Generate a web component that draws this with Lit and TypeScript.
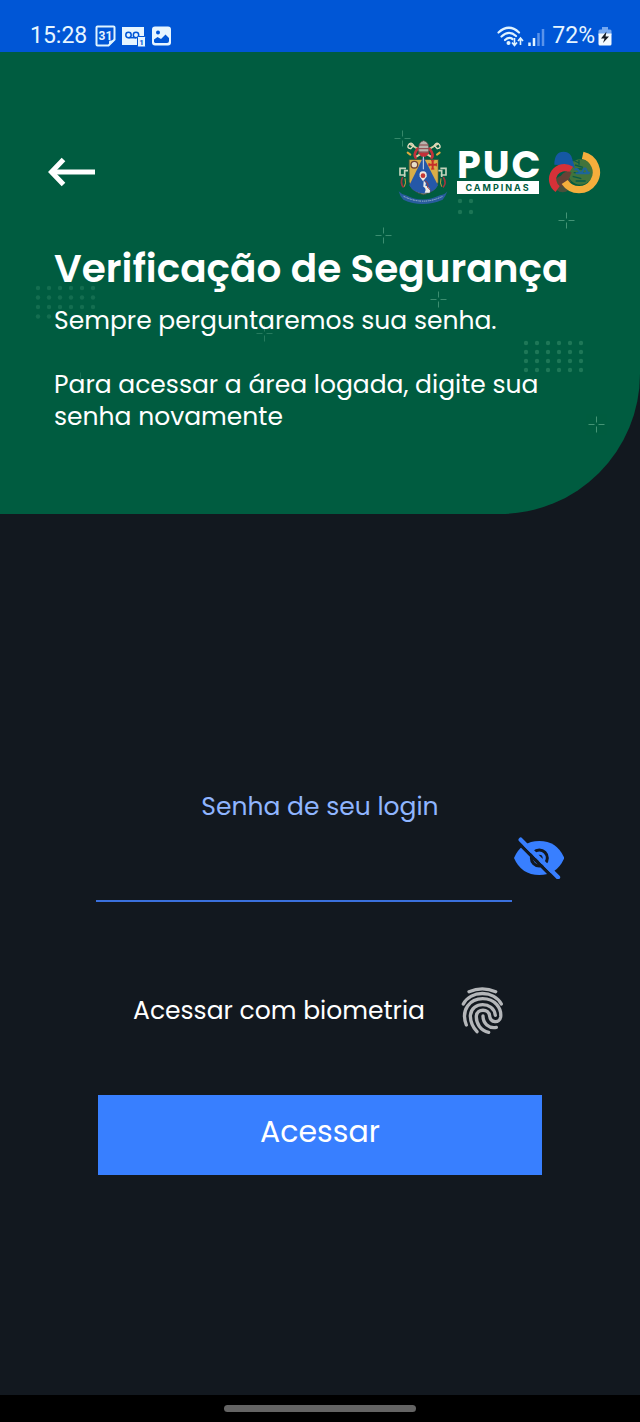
import { LitElement, html, css, svg } from "lit";
import { customElement, state } from "lit/decorators.js";

const CROSSES = [
  [402, 86, 0.7], [566, 168, 0.9], [383, 183, 0.8], [438, 247, 0.8], [596, 372, 0.9], [264, 281, 0.5], [80, 328, 0.3],
];

function dots(x: number, y: number, cols: number, rows: number, dx: number, dy: number, opacity: number) {
  const out = [];
  for (let r = 0; r < rows; r++)
    for (let c = 0; c < cols; c++)
      out.push(svg`<circle cx=${x + c * dx} cy=${y + r * dy} r="2.2" fill="#4fa37f" opacity=${opacity} />`);
  return out;
}

@customElement("status-bar")
export class StatusBar extends LitElement {
  static styles = css`
    :host { display: block; background: #0056d6; color: #e6f5ff; font: 400 23px/28px Roboto, sans-serif; }
    .bar { display: flex; justify-content: space-between; align-items: center; padding: 22px 28px 2px 30px; }
    .group { display: flex; align-items: center; gap: 6px; }
    .time { margin-right: 2px; }
    .battery { display: flex; align-items: center; gap: 3px; }
    svg { display: block; }
  `;
  render() {
    return html`<div class="bar">
      <div class="group">
        <span class="time">15:28</span>
        <svg width="21" height="22" viewBox="0 0 21 22" aria-label="Calendário">
          <path d="M2.500 1.500H18.500Q19.500 1.500 19.500 2.500V14.500L13.500 20.500H2.500Q1.500 20.500 1.500 19.500V2.500Q1.500 1.500 2.500 1.500Z" fill="none" stroke="#dff3ff" stroke-width="2" />
          <path d="M14 20.500V16.500Q14 15.500 15 15.500H19.500Z" fill="#dff3ff" />
          <text x="10.500" y="15" text-anchor="middle" font-family="Roboto" font-weight="700" font-size="12" fill="#e6f5ff">31</text>
        </svg>
        <svg width="24" height="21" viewBox="0 0 24 21" aria-label="Correio de voz">
          <path d="M0 1H22V11H16V19H0Z" fill="#e6f5ff" />
          <circle cx="6.500" cy="9" r="2.700" fill="none" stroke="#0056d6" stroke-width="1.500" />
          <circle cx="14" cy="9" r="2.700" fill="none" stroke="#0056d6" stroke-width="1.500" />
          <path d="M6.500 11.700H14" stroke="#0056d6" stroke-width="1.500" />
          <rect x="15.500" y="10.500" width="8" height="10.500" rx="1" fill="#e6f5ff" stroke="#0056d6" />
          <text x="19.500" y="18.500" text-anchor="middle" font-family="Roboto" font-weight="700" font-size="8" fill="#0056d6">1</text>
        </svg>
        <svg width="19" height="20" viewBox="0 0 19 20" aria-label="Imagem">
          <rect y="0.500" width="19" height="19" rx="3" fill="#e6f5ff" />
          <circle cx="6" cy="6.500" r="2" fill="#0056d6" />
          <path d="M2 16V13.500L5.500 11L9 13L13.500 8.500L17 12V15Q17 17 15 17H3Z" fill="#0056d6" />
        </svg>
      </div>
      <div class="group">
        <svg width="49" height="21" viewBox="0 0 49 21" aria-label="Wi-Fi e sinal">
          <g fill="none" stroke="#dff3ff" stroke-width="2.200" stroke-linecap="round">
            <path d="M1.500 6.500Q12 -3 22 6.500" />
            <path d="M4.500 10.500Q12 3.500 19 10" />
            <path d="M8 14Q12 10.500 15.500 13" />
          </g>
          <circle cx="11.500" cy="17" r="2" fill="#dff3ff" />
          <path d="M17.500 12V19M15 16.500L17.500 19.500L20 16.500M23.500 19V12.500M21 15L23.500 12L26 15" fill="none" stroke="#dff3ff" stroke-width="1.600" />
          <path d="M32.500 20V16.500M37 20V12" stroke="#dff3ff" stroke-width="2.500" />
          <path d="M41.500 20V7M46 20V3" stroke="#5a93ea" stroke-width="2.500" />
        </svg>
        <div class="battery">
          <span>72%</span>
          <svg width="14" height="19" viewBox="0 0 14 19" aria-label="Carregando">
            <path d="M4 0H10V2.500H12Q13.500 2.500 13.500 4V8H0.500V4Q0.500 2.500 2 2.500H4Z" fill="#75a8f0" />
            <path d="M0.500 6.500H13.500V17Q13.500 18.500 12 18.500H2Q0.500 18.500 0.500 17Z" fill="#f4faff" />
            <path d="M8.500 4.500L3 11.500H6.500L5 16L11 9.500H7.500Z" fill="#151c26" />
          </svg>
        </div>
      </div>
    </div>`;
  }
}

@customElement("brand-logo")
export class BrandLogo extends LitElement {
  static styles = css`
    :host { display: flex; align-items: center; gap: 8px; }
    svg { display: block; flex: none; }
    .word { display: flex; flex-direction: column; width: 82px; color: #fff; font-family: Poppins, Inter, sans-serif; }
    .puc { display: flex; justify-content: space-between; font-size: 38px; line-height: 29px; font-weight: 700; letter-spacing: 2px; }
    .campinas { margin-top: 2px; background: #fff; color: #005c40; font-family: Inter, sans-serif; font-size: 9px; line-height: 13px; font-weight: 700; letter-spacing: 2px; text-align: center; }
  `;
  render() {
    return html`
      <svg width="52" height="64" viewBox="0 0 156 192" role="img" aria-label="Brasão">
        <g fill="none" stroke-linecap="round">
          <path d="M58 50L122 12M102 50L38 12" stroke="#d8cfa3" stroke-width="6" />
          <path d="M50 16q-8 -12 -15 -2t6 12zM112 16q8 -12 15 -2t-6 12z" stroke="#e3dcc0" stroke-width="4" />
          <path d="M62 26Q48 44 56 54M97 26Q112 44 104 54" stroke="#c4303a" stroke-width="8" />
          <path d="M40 44L32 38M120 44L128 38" stroke="#dba93e" stroke-width="6" />
        </g>
        <path d="M66 38Q60 6 80 2Q100 6 94 38Z" fill="#b8b3ad" stroke="#6b5352" stroke-width="2" />
        <path d="M64 36H96M64 26H96M66 15H94" stroke="#8e3f43" stroke-width="3" />
        <path d="M62 38L74 50H86L98 38" fill="#c4303a" />
        <path d="M36 58H124V126Q118 156 80 164Q42 156 36 126Z" fill="#d9ad48" stroke="#31513f" stroke-width="3" />
        <path d="M79 50L123 136Q112 158 80 161Q48 158 37 136Z" fill="#2558a8" />
        <path d="M79 50V88" stroke="#d6e0ee" stroke-width="3" />
        <circle cx="52" cy="74" r="10" fill="#e8ddc8" stroke="#744335" stroke-width="4" />
        <path d="M107 62V88M95 74H119" stroke="#c62e29" stroke-width="6" />
        <path d="M102 62H112M102 87H112M96 69V79M118 69V79" stroke="#c62e29" stroke-width="3" />
        <path d="M68 110Q65 94 78 94Q91 94 89 110L78 124Z" fill="#f1e9de" />
        <circle cx="78" cy="107" r="7" fill="#c43835" />
        <path d="M80 122Q91 130 84 136Q104 145 98 158H83Q90 145 79 140Z" fill="#efede7" />
        <path d="M84 122Q98 132 91 141L101 151" fill="none" stroke="#a43a38" stroke-width="3" />
        <g fill="none" stroke-width="5">
          <path d="M27 85H9V105H26M33 92H23V111M130 85H147V105H131M124 92H134V111" stroke="#c5d4bc" />
          <path d="M17 111Q8 130 20 142M139 111Q150 130 138 142" stroke="#a4353c" />
          <path d="M24 115Q28 130 22 140M132 115Q128 130 134 140" stroke="#ce9c3c" stroke-width="3" />
        </g>
        <path d="M5 154Q14 164 27 166Q75 191 129 166Q144 164 151 154Q146 169 137 179Q75 205 19 179Q8 168 5 154Z" fill="#285c9d" />
        <path d="M20 169Q78 198 137 169" fill="none" stroke="#a8bfd3" stroke-width="3" stroke-dasharray="4 2 3 2 5 3" />
      </svg>
      <div class="word"><span class="puc">PUC</span><span class="campinas">CAMPINAS</span></div>
      <svg width="54" height="44" viewBox="0 0 162 132" role="img" aria-label="80 anos">
        <circle cx="100" cy="66" r="38" fill="#42743c" />
        <path d="M22 44Q22 5 50 5Q72 5 76 28L84 54L60 46Z" fill="#1558a3" />
        <circle cx="47" cy="102" r="25" fill="#48503c" />
        <path d="M72 59A35 35 0 1 0 32 117" fill="none" stroke="#d63138" stroke-width="22" />
        <path d="M43 76Q56 60 74 67L62 95Q55 113 40 109Q25 90 43 76Z" fill="#654236" />
        <path d="M107 16A52 52 0 1 1 53 96" fill="none" stroke="#f5ae3c" stroke-width="22" />
        <path d="M78 30L96 39M84 45L108 52M88 57H107M80 68H112M77 79L103 86M86 93H116M96 30V44" stroke="#075c49" stroke-width="4" />
        <path d="M82 60Q90 52 96 63T108 61T119 62T127 65M86 70H127" fill="none" stroke="#1d659b" stroke-width="6" />
      </svg>`;
  }
}

@customElement("app-root")
export class AppRoot extends LitElement {
  static styles = css`
    :host { display: flex; flex-direction: column; min-height: 100vh; background: #12181f; color: #fff; font-family: Poppins, Inter, sans-serif; }
    * { box-sizing: border-box; }
    button { border: 0; padding: 0; background: none; color: inherit; font: inherit; cursor: pointer; }
    svg { display: block; }
    .hero { position: relative; overflow: hidden; background: #005c40; border-bottom-right-radius: 140px; padding: 88px 39px 81px 48px; }
    .pattern { position: absolute; top: 0; left: 0; pointer-events: none; }
    .top, .title, .text { position: relative; }
    .top { display: flex; align-items: center; justify-content: space-between; height: 64px; }
    .title { margin: 41px 0 0 6px; font-size: 39px; line-height: 48px; font-weight: 600; }
    .text { margin: 12px 0 0 6px; font-size: 25px; line-height: 32px; }
    .text + .text { margin-top: 32px; max-width: 500px; }
    .form { flex: 1; display: flex; flex-direction: column; padding-top: 277px; }
    .label { text-align: center; color: #8fb5ff; font-size: 25px; line-height: 32px; }
    .field { display: flex; align-items: flex-start; gap: 2px; padding: 0 76px 0 96px; margin-top: 14px; }
    .input { flex: 1; min-width: 0; height: 65px; border: 0; border-bottom: 2px solid #3a70dd; border-radius: 0; outline: 0; padding: 0; background: transparent; color: #fff; font: inherit; font-size: 25px; }
    .bio { display: flex; align-items: center; align-self: center; gap: 36px; padding-right: 4px; margin-top: 84px; font-size: 25px; line-height: 32px; }
    .submit { margin: 59px 98px 0; height: 80px; padding-bottom: 6px; background: #387fff; font-size: 30px; line-height: 40px; }
    .nav { display: flex; justify-content: center; align-items: center; height: 27px; background: #000; }
    .pill { width: 30%; height: 7px; border-radius: 4px; background: #646464; }
  `;

  @state() private visible = false;

  render() {
    return html`
      <status-bar></status-bar>
      <header class="hero">
        <svg class="pattern" width="640" height="462" viewBox="0 0 640 462" aria-hidden="true">
          ${CROSSES.map(([x, y, o]) => svg`<path d="M${x - 8} ${y}H${x - 2}M${x + 2} ${y}H${x + 8}M${x} ${y - 8}V${y - 2}M${x} ${y + 2}V${y + 8}" transform="translate(.5 .5)" stroke="#4c9b7c" opacity=${o} />`)}
          ${dots(38, 236, 6, 3, 11, 9.5, 0.26)}
          ${dots(38, 264.5, 2, 1, 11, 9.5, 0.26)}
          ${dots(526, 291, 6, 4, 11, 9, 0.38)}
          ${dots(460, 149, 2, 2, 11, 11, 0.35)}
        </svg>
        <div class="top">
          <button class="back" type="button" aria-label="Voltar">
            <svg width="48" height="30" viewBox="0 0 48 30" fill="none" stroke="#fff">
              <path d="M3 15H47" stroke-width="5" /><path d="M15.500 2.500L3.500 15L15.500 27.500" stroke-width="5" />
            </svg>
          </button>
          <brand-logo></brand-logo>
        </div>
        <h1 class="title">Verificação de Segurança</h1>
        <p class="text">Sempre perguntaremos sua senha.</p>
        <p class="text">Para acessar a área logada, digite sua senha novamente</p>
      </header>
      <form class="form" @submit=${(e: Event) => e.preventDefault()}>
        <label class="label" for="senha">Senha de seu login</label>
        <div class="field">
          <input class="input" id="senha" type=${this.visible ? "text" : "password"} />
          <button type="button" aria-label="Mostrar senha" @click=${() => (this.visible = !this.visible)}>
            <svg width="50" height="42" viewBox="72 52 150 126">
              <path d="M72 115Q94 64 148 64Q201 64 223 115Q201 166 148 166Q94 166 72 115Z" fill="#387fff" />
              <circle cx="148" cy="115" r="24" fill="#387fff" stroke="#12181f" stroke-width="9" />
              <circle cx="148" cy="115" r="10" fill="#12181f" />
              <path d="M84 68L196 181" stroke="#12181f" stroke-width="10" />
              <path d="M92 60L204 173" stroke="#387fff" stroke-width="13" stroke-linecap="round" />
            </svg>
          </button>
        </div>
        <button class="bio" type="button">
          <span>Acessar com biometria</span>
          <svg width="42" height="50" viewBox="62 50 126 150" fill="none" stroke="#b4b6b9" stroke-width="10" stroke-linecap="round" aria-hidden="true">
            <path d="M86 67Q126 50 166 67" />
            <path d="M69 104C91 62 161 62 183 104" />
            <path d="M78 167C60 120 90 88 127 88C165 88 184 118 181 143C177 164 150 160 148 140C146 117 110 117 108 140C107 162 120 183 145 189" />
            <path d="M110 187C94 170 90 152 90 138C94 95 160 95 165 138" />
            <path d="M128 140C128 162 145 178 168 174" />
          </svg>
        </button>
        <button class="submit" type="submit">Acessar</button>
      </form>
      <footer class="nav"><div class="pill"></div></footer>
    `;
  }
}
